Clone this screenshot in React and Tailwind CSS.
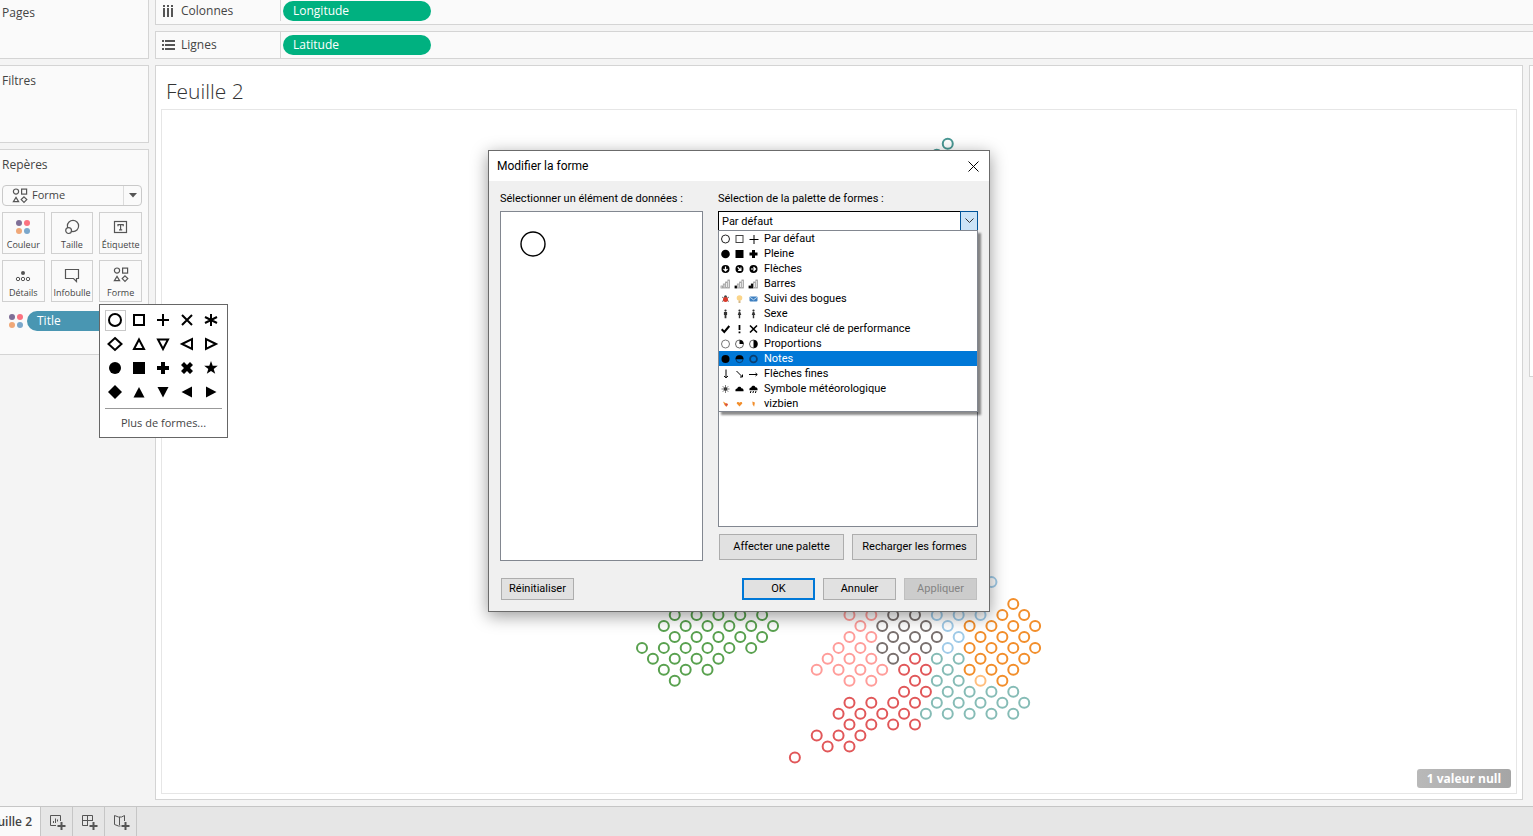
import React, { useState } from 'react';

const STEP_X = 10.92;
const STEP_Y = 10.96;

// Each mark group: colour and [row, columns] pairs on the hexagonal grid
const markGroups = [
  { color: '#499894', rows: [[-43, [28]], [-42, [27]]] },
  {
    color: '#59a14f',
    rows: [
      [0, [3, 5, 7, 9, 11]],
      [1, [2, 4, 6, 8, 10, 12]],
      [2, [3, 5, 7, 9, 11]],
      [3, [0, 2, 4, 6, 8, 10]],
      [4, [1, 3, 5, 7]],
      [5, [2, 4, 6]],
      [6, [3]],
    ],
  },
  {
    color: '#ff9d9a',
    rows: [
      [0, [19, 21]],
      [1, [20]],
      [2, [19, 21]],
      [3, [18, 20]],
      [4, [17, 19, 21]],
      [5, [16, 18, 20, 22]],
      [6, [19, 21]],
    ],
  },
  {
    color: '#79706e',
    rows: [
      [0, [23, 25]],
      [1, [22, 24, 26]],
      [2, [23, 25, 27]],
      [3, [22, 24, 26]],
      [4, [23]],
    ],
  },
  {
    color: '#a0cbe8',
    rows: [[-3, [32]], [0, [27, 29, 31]], [1, [28]], [2, [29]], [3, [28]]],
  },
  {
    color: '#f28e2b',
    rows: [
      [-1, [34]],
      [0, [33, 35]],
      [1, [30, 32, 34, 36]],
      [2, [31, 33, 35]],
      [3, [30, 32, 34, 36]],
      [4, [31, 33, 35]],
      [5, [30, 32, 34]],
      [6, [33]],
    ],
  },
  { color: '#ffbe7d', rows: [[6, [31]]] },
  {
    color: '#e15759',
    rows: [
      [4, [25]],
      [5, [24, 26]],
      [6, [25]],
      [7, [24, 26]],
      [8, [19, 21, 23, 25]],
      [9, [18, 20, 22, 24]],
      [10, [19, 21, 23, 25]],
      [11, [16, 18, 20]],
      [12, [17, 19]],
      [13, [14]],
    ],
  },
  {
    color: '#86bcb6',
    rows: [
      [4, [27, 29]],
      [5, [28]],
      [6, [27, 29]],
      [7, [28, 30, 32, 34]],
      [8, [27, 29, 31, 33, 35]],
      [9, [26, 28, 30, 32, 34]],
    ],
  },
];

const star = 'M0-7 1.7-2.2 6.8-2.2 2.7 .9 4.2 5.8 0 2.9-4.2 5.8-2.7 .9-6.8-2.2-1.7-2.2z';

// Shapes of the default palette, drawn around the origin
const shapes = [
  { name: 'Cercle', open: true, d: 'M-6 0a6 6 0 1 0 12 0a6 6 0 1 0-12 0z' },
  { name: 'Carré', open: true, d: 'M-5-5h10v10h-10z' },
  { name: 'Plus', open: true, d: 'M-6 0h12M0-6v12' },
  { name: 'Croix', open: true, d: 'M-5-5 5 5M5-5-5 5' },
  { name: 'Astérisque', open: true, d: 'M0-6v12M-6-3 6 3M6-3-6 3' },
  { name: 'Losange', open: true, d: 'M0-6 6.5 0 0 6-6.5 0z' },
  { name: 'Triangle haut', open: true, d: 'M0-4.5 5 5h-10z' },
  { name: 'Triangle bas', open: true, d: 'M0 5-5-4.5h10z' },
  { name: 'Triangle gauche', open: true, d: 'M-5 0 5-5v10z' },
  { name: 'Triangle droit', open: true, d: 'M5 0-5-5v10z' },
  { name: 'Cercle plein', d: 'M-6 0a6 6 0 1 0 12 0a6 6 0 1 0-12 0z' },
  { name: 'Carré plein', d: 'M-6-6h12v12h-12z' },
  { name: 'Plus plein', d: 'M-2-6h4v4h4v4h-4v4h-4v-4h-4v-4h4z' },
  { name: 'Croix pleine', d: 'M-3-6 0-3 3-6 6-3 3 0 6 3 3 6 0 3-3 6-6 3-3 0-6-3z' },
  { name: 'Étoile', d: star },
  { name: 'Losange plein', d: 'M0-7 7 0 0 7-7 0z' },
  { name: 'Triangle haut plein', d: 'M0-5 5.5 5.5h-11z' },
  { name: 'Triangle bas plein', d: 'M0 5.5-5.5-5h11z' },
  { name: 'Triangle gauche plein', d: 'M-5.5 0 5-5.5v11z' },
  { name: 'Triangle droit plein', d: 'M5.5 0-5-5.5v11z' },
];

const arrow = 'M0-2.5v4M-2 0 0 2 2 0';

function RoundArrow({ angle }) {
  return (
    <>
      <circle r="4" fill="#000" />
      <path d={arrow} transform={`rotate(${angle})`} stroke="#fff" strokeWidth="1.2" fill="none" />
    </>
  );
}

function Bars({ filled }) {
  return (
    <g strokeWidth="0.8">
      {[0, 1, 2, 3].map(i => (
        <rect
          key={i}
          x={-4.5 + i * 2.3}
          y={2 - i * 2}
          width="1.6"
          height={2 + i * 2}
          fill={i < filled ? '#000' : '#fff'}
          stroke={i < filled ? '#000' : '#999'}
        />
      ))}
    </g>
  );
}

function Person({ skirt }) {
  return (
    <g fill="#333">
      <circle cy="-3.4" r="1.1" />
      <path d={skirt ? 'M-.8-2h1.6L1.8 1H.7V4.3H-.7V1H-1.8z' : 'M-1.6-2h3.2V1H.9V4.3H-.9V1H-1.6z'} />
    </g>
  );
}

function ThinArrow({ d }) {
  return <path d={d} stroke="#000" fill="none" />;
}

const cloud = 'M-4 2.2C-4.6 0-2.8-.6-2.3-.5-1.8-2.8 1.4-2.8 1.8-.8 3.6-1 4.4 .8 4 2.2z';
const cross = 'M-3.5-3.5 3.5 3.5M3.5-3.5-3.5 3.5';
const heart = 'M0 2.5-2.8-.5C-2.6-2.6-.6-2.2 0-1.2 .6-2.2 2.6-2.6 2.8-.5z';

const palettes = [
  {
    name: 'Par défaut',
    icons: [
      <circle r="4" fill="none" stroke="#222" />,
      <rect x="-3.5" y="-3.5" width="7" height="7" fill="none" stroke="#444" />,
      <path d="M-4 .5h9M.5-4v9" stroke="#000" />,
    ],
  },
  {
    name: 'Pleine',
    icons: [
      <circle r="4.3" />,
      <rect x="-4" y="-4" width="8" height="8" />,
      <path d="M-4 0h8M0-4v8" stroke="#000" strokeWidth="3" />,
    ],
  },
  {
    name: 'Flèches',
    icons: [<RoundArrow angle={0} />, <RoundArrow angle={-45} />, <RoundArrow angle={-90} />],
  },
  { name: 'Barres', icons: [<Bars filled={0} />, <Bars filled={1} />, <Bars filled={2} />] },
  {
    name: 'Suivi des bogues',
    icons: [
      <>
        <path d="M-3.5-2 3.5 2.5M3.5-2-3.5 2.5" stroke="#777" />
        <circle cy="-2.2" r="1.5" fill="#444" />
        <circle cy=".6" r="2.5" fill="#d93a2b" />
      </>,
      <>
        <circle cy="-1" r="2.8" fill="#fbd58a" />
        <path d="M-1 1.5h2v2.5h-2z" fill="#d5b98a" />
      </>,
      <>
        <rect x="-4" y="-2.5" width="8" height="5" rx="1" fill="#3d7fc0" />
        <path d="M-3.4-1.6 0 .8 3.4-1.6" stroke="#bcd8f2" fill="none" />
      </>,
    ],
  },
  { name: 'Sexe', icons: [<Person />, <Person skirt />, <Person skirt />] },
  {
    name: 'Indicateur clé de performance',
    icons: [
      <path d="M-3.8 .3-1.2 3 3.8-3" stroke="#000" strokeWidth="2" fill="none" />,
      <path d="M0-4v5M0 2.4v1.8" stroke="#000" strokeWidth="1.8" />,
      <path d={cross} stroke="#000" strokeWidth="1.6" />,
    ],
  },
  {
    name: 'Proportions',
    icons: [
      <circle r="4" fill="none" stroke="#777" />,
      <>
        <circle r="4" fill="none" stroke="#666" />
        <path d="M0 0V-4A4 4 0 0 1 4 0z" />
      </>,
      <>
        <circle r="4" fill="none" stroke="#666" />
        <path d="M0 4V-4A4 4 0 0 1 0 4z" />
      </>,
    ],
  },
  {
    name: 'Notes',
    icons: [
      <circle r="4" />,
      <>
        <circle r="3.6" fill="none" stroke="#0a3f73" />
        <path d="M-4 .3A4 4 0 0 1 4 .3z" />
      </>,
      <circle r="3.4" fill="none" stroke="#0b3f70" strokeWidth="1.8" />,
    ],
  },
  {
    name: 'Flèches fines',
    icons: [
      <ThinArrow d="M.5-4.5v8M-1.5 2 .5 3.8 2.5 2" />,
      <ThinArrow d="M-3-3 3 3M3 .5V3H.5" />,
      <ThinArrow d="M-4.5 .5h8M2-1 3.8 .5 2 2" />,
    ],
  },
  {
    name: 'Symbole météorologique',
    icons: [
      <>
        <circle r="1.8" fill="#222" />
        <path d="M0-4v8M-4 0h8M-2.8-2.8l5.6 5.6M2.8-2.8l-5.6 5.6" stroke="#444" strokeWidth=".7" />
      </>,
      <path d={cloud} />,
      <>
        <path d={cloud} transform="translate(0 -1)" />
        <path d="M-2.5 2-3.2 4M0 2-.6 4M2.5 2 1.9 4" stroke="#000" />
      </>,
    ],
  },
  {
    name: 'vizbien',
    icons: [
      <>
        <path d="M-2.5-2.5 0-1 2.5 0 1 3-1 1z" fill="#f28e2b" />
        <circle cx="1" cy=".6" r="1.2" fill="#d5494b" />
      </>,
      <path d={heart} fill="#f28e2b" />,
      <path d="M-1.2-2.5 1.4-1.4 .6 2.8-.8 .5z" fill="#f28e2b" />,
    ],
  },
];

function ShapesIcon() {
  return (
    <svg width="16" height="16" viewBox="0 0 16 16" fill="none" stroke="#555" strokeWidth="1.2" aria-hidden="true">
      <circle cx="4" cy="3.6" r="2.6" />
      <rect x="9.6" y="1.1" width="5" height="5" />
      <path d="M4 9.4 6.6 13.6H1.4z" />
      <path d="M12 8.8 14.8 11.6 12 14.4 9.2 11.6z" />
    </svg>
  );
}

function ColorDots() {
  return (
    <svg width="16" height="16" viewBox="0 0 16 16" aria-hidden="true">
      <circle cx="4" cy="4" r="3" fill="#7f6f97" />
      <circle cx="12" cy="4" r="3" fill="#fb7280" />
      <circle cx="4" cy="12" r="3" fill="#f0a878" />
      <circle cx="12" cy="12" r="3" fill="#7ba7cb" />
    </svg>
  );
}

const marks = [
  { label: 'Couleur', icon: <ColorDots /> },
  {
    label: 'Taille',
    icon: (
      <svg width="16" height="16" viewBox="0 0 16 16" fill="#fafafa" stroke="#555" strokeWidth="1.2">
        <circle cx="9" cy="7" r="5.6" />
        <circle cx="4.6" cy="11.6" r="2.9" />
      </svg>
    ),
  },
  {
    label: 'Étiquette',
    icon: (
      <svg width="16" height="16" viewBox="0 0 16 16" fill="none" stroke="#555" strokeWidth="1.2">
        <rect x="1.5" y="2.5" width="12" height="11" />
        <path d="M5 7.2V5.6h5.2v1.6M7.6 5.6v5M6 10.8h3.2" />
      </svg>
    ),
  },
  {
    label: 'Détails',
    icon: (
      <svg width="16" height="16" viewBox="0 0 16 16" fill="none" stroke="#555">
        <circle cx="8" cy="6" r="2" fill="#555" stroke="none" />
        <circle cx="3" cy="12" r="1.7" />
        <circle cx="8" cy="12" r="1.7" />
        <circle cx="13" cy="12" r="1.7" />
      </svg>
    ),
  },
  {
    label: 'Infobulle',
    icon: (
      <svg width="16" height="16" viewBox="0 0 16 16" fill="none" stroke="#555" strokeWidth="1.2">
        <path d="M1.5 2.5h13v9h-2v3l-3-3h-8z" />
      </svg>
    ),
  },
  { label: 'Forme', icon: <ShapesIcon /> },
];

function Plus() {
  return <path d="M13.5 9v8M9.5 13h8" strokeWidth="2" />;
}

const sheetButtons = [
  {
    label: 'Nouvelle feuille',
    icon: (
      <>
        <path d="M8 12.5H2.5v-10h10V8" />
        <path d="M5.5 10V8M7.5 10V5.5M9.5 8.5V6.5" />
      </>
    ),
  },
  { label: 'Nouveau tableau de bord', icon: <path d="M8 12.5H2.5v-10h10V8M2.5 7.5h10M7.5 2.5v10" /> },
  { label: 'Nouvelle histoire', icon: <path d="M12.5 8V2.5L9.5 4h-3l-4-1.5v9l4 1.5h2M7.5 4v8" /> },
];

function Shelf({ label, icon, pill, className }) {
  return (
    <div className={`flex border-l border-b border-[#d4d4d4] bg-[#fafafa] ${className}`}>
      <div className="flex w-[125px] items-center gap-1.5 border-r border-[#d4d4d4] pl-1.5 text-[12px]">
        {icon}
        {label}
      </div>
      <div className="flex items-center pl-0.5">
        <button className="h-5 w-[148px] rounded-full bg-[#00b180] pl-2.5 text-left text-[12px] font-medium leading-5 text-white">
          {pill}
        </button>
      </div>
    </div>
  );
}

function MarksCard() {
  return (
    <section className="h-[206px] border border-l-0 border-[#d4d4d4] bg-[#fafafa] pl-0.5">
      <h2 className="pt-1.5 text-[12px] leading-[18px]">Repères</h2>
      <div className="relative mt-[11px] flex h-[21px] w-[140px] items-center rounded-sm border border-[#c9c9c9]">
        <span className="pl-[9px]">
          <ShapesIcon />
        </span>
        <select
          aria-label="Type de repère"
          className="h-full flex-1 appearance-none bg-transparent pl-1 text-[11px] outline-none"
        >
          <option>Forme</option>
        </select>
        <span className="pointer-events-none flex h-full w-[18px] items-center justify-center border-l border-[#dcdcdc]">
          <svg width="8" height="5" viewBox="0 0 8 5" fill="#555">
            <path d="M0 0h8L4 4.5z" />
          </svg>
        </span>
      </div>
      <div className="mt-1.5 grid w-[140px] grid-cols-3 gap-1.5">
        {marks.map(m => (
          <button
            key={m.label}
            className="flex h-[42px] flex-col items-center border border-[#d0d0d0] pt-1.5 text-[9px] leading-3"
          >
            {m.icon}
            <span className="mt-1 whitespace-nowrap">{m.label}</span>
          </button>
        ))}
      </div>
      <div className="mt-[9px] flex items-center gap-[3px] pl-1.5">
        <ColorDots />
        <button className="h-5 w-[114px] rounded-full bg-[#4996b2] pl-2.5 text-left text-[12px] font-medium leading-5 text-white">
          Title
        </button>
      </div>
    </section>
  );
}

function ShapeMenu() {
  return (
    <div className="absolute left-[99px] top-[304px] w-[129px] border border-[#666] bg-white">
      <div className="grid grid-cols-[repeat(5,24px)] pl-[3px] pt-[3px]">
        {shapes.map((s, i) => (
          <button key={s.name} aria-label={s.name} className="flex h-6 items-center justify-center">
            <span
              className={`flex h-[21px] w-[21px] items-center justify-center border ${
                i === 0 ? 'border-[#c8c8c8]' : 'border-transparent'
              }`}
            >
              <svg width="16" height="16" viewBox="-8 -8 16 16" className="shrink-0">
                <path d={s.d} fill={s.open ? 'none' : '#000'} stroke={s.open ? '#000' : 'none'} strokeWidth="2" />
              </svg>
            </span>
          </button>
        ))}
      </div>
      <hr className="mx-[5px] mt-1 border-[#999]" />
      <button className="h-7 w-full text-[11px]">Plus de formes...</button>
    </div>
  );
}

function DialogButton({ className = '', ...props }) {
  return <button className={`border bg-[#e1e1e1] disabled:bg-[#ccc] disabled:text-[#838383] ${className}`} {...props} />;
}

function ShapeDialog() {
  const [palette, setPalette] = useState('Par défaut');

  return (
    <div
      role="dialog"
      aria-labelledby="dialog-title"
      className="absolute left-[488px] top-[150px] w-[502px] border border-[#6b6b6b] bg-[#f0f0f0] font-[Roboto,sans-serif] text-[11px] text-black shadow-[0_4px_16px_rgba(0,0,0,0.4)]"
    >
      <div className="flex h-[30px] items-center justify-between bg-white pl-2 pr-2.5">
        <h2 id="dialog-title" className="text-[12px]">Modifier la forme</h2>
        <button aria-label="Fermer">
          <svg width="11" height="11" viewBox="0 0 11 11" stroke="#000">
            <path d="M.5 .5l10 10M10.5 .5l-10 10" />
          </svg>
        </button>
      </div>

      <div className="flex gap-[15px] px-[11px] pt-2.5">
        <div className="w-[203px]">
          <p className="h-5 leading-4">Sélectionner un élément de données :</p>
          <div className="h-[350px] border border-[#828790] bg-white p-[18px]">
            <svg width="28" height="28" viewBox="-14 -14 28 28">
              <circle r="12" fill="none" stroke="#000" strokeWidth="1.4" />
            </svg>
          </div>
        </div>

        <div className="w-[260px]">
          <label htmlFor="palette" className="block h-5 leading-4">Sélection de la palette de formes :</label>
          <div className="relative">
            <div className="flex h-5">
              <select
                id="palette"
                value={palette}
                onChange={e => setPalette(e.target.value)}
                className="min-w-0 flex-1 appearance-none border border-b-0 border-r-0 border-black bg-white pl-[3px] pt-px outline-none"
              >
                {palettes.map(p => (
                  <option key={p.name}>{p.name}</option>
                ))}
              </select>
              <span className="pointer-events-none flex w-[18px] items-center justify-center border border-[#005499] bg-[#cce4f7]">
                <svg width="9" height="6" viewBox="0 0 9 6" fill="none" stroke="#333">
                  <path d="M.5 .5l4 4 4-4" />
                </svg>
              </span>
            </div>
            <ul className="absolute left-0 top-[19px] w-full border border-[#828790] bg-white shadow-[3px_3px_2px_rgba(0,0,0,0.45)]">
              {palettes.map(p => (
                <li
                  key={p.name}
                  onClick={() => setPalette(p.name)}
                  className={`flex h-[15px] items-center whitespace-nowrap ${
                    p.name === 'Notes' ? 'bg-[#0078d7] text-white' : ''
                  }`}
                >
                  {p.icons.map((icon, i) => (
                    <svg key={i} width="14" height="14" viewBox="-6.5 -7 14 14" className="shrink-0">
                      {icon}
                    </svg>
                  ))}
                  <span className="pl-[3px] leading-[15px]">{p.name}</span>
                </li>
              ))}
            </ul>
          </div>
          <div className="h-[296px] border border-t-0 border-[#828790] bg-white" />
          <div className="mt-[7px] flex gap-2 px-px">
            <DialogButton className="h-[26px] flex-1 border-[#adadad]">Affecter une palette</DialogButton>
            <DialogButton className="h-[26px] flex-1 border-[#adadad]">Recharger les formes</DialogButton>
          </div>
        </div>
      </div>

      <div className="flex gap-2 px-3 pb-[11px] pt-[17px]">
        <DialogButton className="mr-auto h-[22px] w-[73px] border-[#adadad]">Réinitialiser</DialogButton>
        <DialogButton className="h-[22px] w-[73px] border-2 border-[#0078d7]">OK</DialogButton>
        <DialogButton className="h-[22px] w-[73px] border-[#adadad]">Annuler</DialogButton>
        <DialogButton disabled className="h-[22px] w-[73px] border-[#bfbfbf]">Appliquer</DialogButton>
      </div>
    </div>
  );
}

export default function App() {
  return (
    <div className="relative flex h-screen flex-col overflow-hidden bg-[#f4f4f4] font-['Open_Sans',sans-serif] text-[#444]">
      <main className="flex min-h-0 flex-1 gap-1.5 pb-1.5">
        <aside className="flex w-[149px] shrink-0 flex-col gap-1.5">
          <section className="h-[59px] border-b border-r border-[#d4d4d4] bg-[#fafafa] pl-0.5 pt-1">
            <h2 className="text-[12px] leading-[18px]">Pages</h2>
          </section>
          <section className="h-[78px] border border-l-0 border-[#d4d4d4] bg-[#fafafa] pl-0.5 pt-1.5">
            <h2 className="text-[12px] leading-[18px]">Filtres</h2>
          </section>
          <MarksCard />
        </aside>

        <div className="flex min-w-0 flex-1 flex-col gap-1.5">
          <Shelf
            label="Colonnes"
            pill="Longitude"
            className="h-[25px] pb-[3px]"
            icon={
              <svg width="13" height="12" viewBox="0 0 13 12" fill="#555">
                <path d="M1 0h2v2H1zM5 0h2v2H5zM9 0h2v2H9zM1 3h2v9H1zM5 3h2v9H5zM9 3h2v9H9z" />
              </svg>
            }
          />
          <Shelf
            label="Lignes"
            pill="Latitude"
            className="h-7 border-t"
            icon={
              <svg width="13" height="12" viewBox="0 0 13 12" fill="#555">
                <path d="M0 1h2v2H0zM0 5h2v2H0zM0 9h2v2H0zM3 1h10v2H3zM3 5h10v2H3zM3 9h10v2H3z" />
              </svg>
            }
          />

          <div className="flex min-h-0 flex-1 gap-1.5">
            <section className="flex min-w-0 flex-1 flex-col border border-[#d4d4d4] bg-white px-[5px] pb-[5px]">
              <h1 className="flex h-[43px] items-center pl-[5px] pt-2 text-[21px] font-light text-[#333]">Feuille 2</h1>
              <div className="relative min-h-0 flex-1 overflow-hidden border border-[#e6e6e6]">
                <svg width="100%" height="100%" role="img" aria-label="Carte des repères">
                  <g transform="translate(480 505)" fill="none" strokeWidth="2">
                    {markGroups.map(g =>
                      g.rows.map(([row, cols]) =>
                        cols.map(col => (
                          <circle key={`${row}-${col}`} cx={col * STEP_X} cy={row * STEP_Y} r="5" stroke={g.color} />
                        ))
                      )
                    )}
                  </g>
                </svg>
                <button className="absolute bottom-[5px] right-[5px] h-[19px] w-[94px] rounded-[3px] bg-linear-to-r from-[#b9b9b9] to-[#a5a5a5] text-[12px] font-bold leading-[19px] text-white">
                  1 valeur null
                </button>
              </div>
            </section>
            <aside className="h-[312px] w-1 shrink-0 border border-r-0 border-[#d4d4d4] bg-white" />
          </div>
        </div>
      </main>

      <footer className="flex h-[30px] shrink-0 border-t border-[#c6c6c6] bg-[#e6e6e6]">
        <button className="flex w-[41px] items-center justify-end whitespace-nowrap border-r border-[#c6c6c6] bg-[#fafafa] pr-2 text-[12px] font-semibold">
          Feuille 2
        </button>
        {sheetButtons.map(b => (
          <button
            key={b.label}
            aria-label={b.label}
            className="flex w-8 items-center justify-center border-r border-[#c6c6c6]"
          >
            <svg width="18" height="18" viewBox="0 0 18 18" fill="none" stroke="#555">
              {b.icon}
              <Plus />
            </svg>
          </button>
        ))}
      </footer>

      <ShapeMenu />
      <ShapeDialog />
    </div>
  );
}
